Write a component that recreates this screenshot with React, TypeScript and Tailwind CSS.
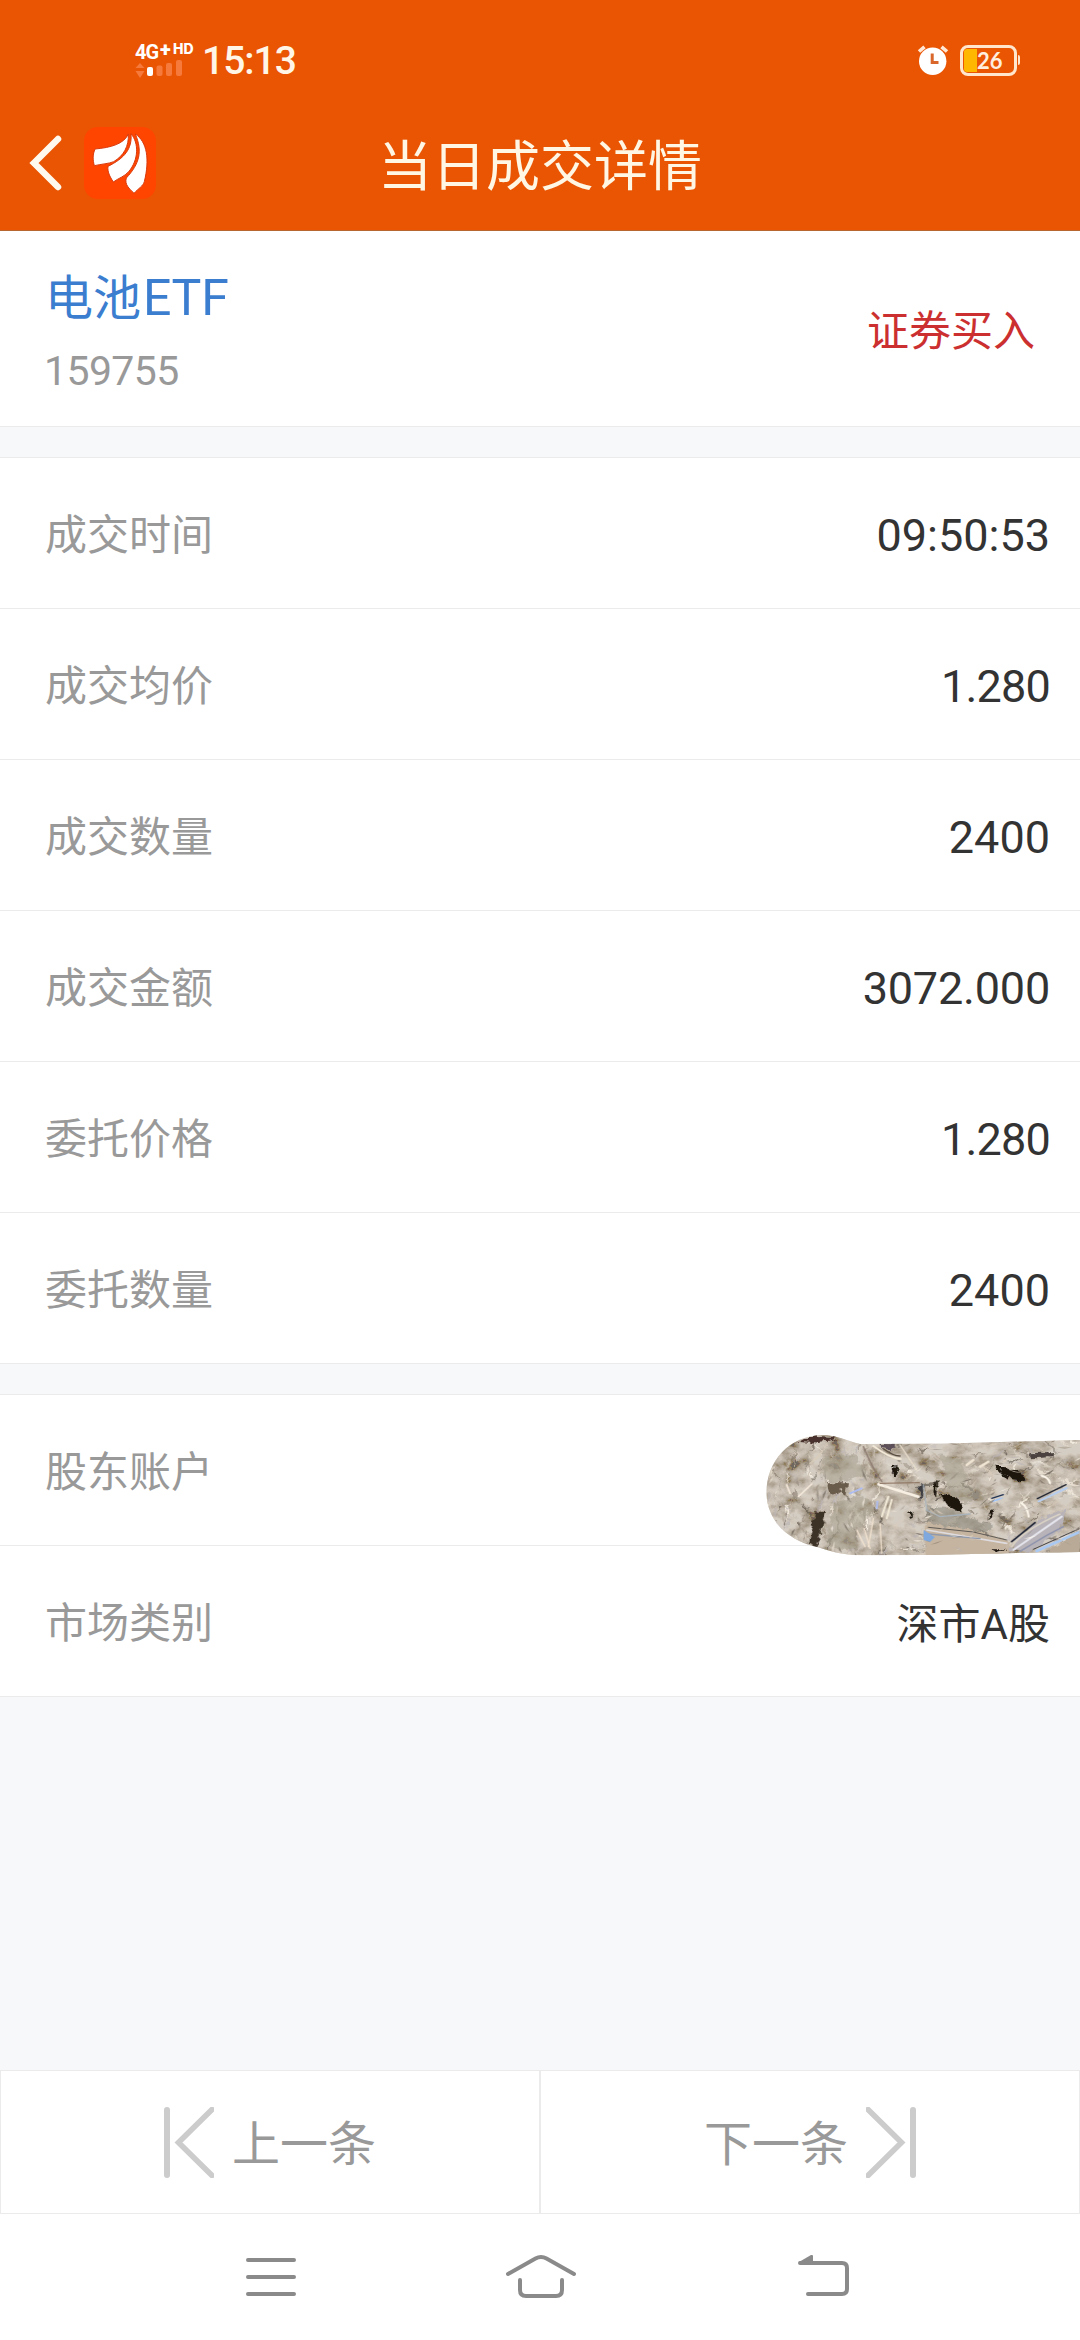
import React from "react";

type Item = { label: string; value?: string; valueClass?: string };

const TRADE: Item[] = [
  { label: "成交时间", value: "09:50:53", valueClass: "text-[45px]" },
  { label: "成交均价", value: "1.280", valueClass: "text-[45px] tracking-[-0.8px]" },
  { label: "成交数量", value: "2400", valueClass: "text-[45px]" },
  { label: "成交金额", value: "3072.000", valueClass: "text-[45px] tracking-[-0.2px]" },
  { label: "委托价格", value: "1.280", valueClass: "text-[45px] tracking-[-0.8px]" },
  { label: "委托数量", value: "2400", valueClass: "text-[45px]" },
];

function SignalIcon() {
  return (
    <svg className="block h-[18px] w-[48px]" viewBox="0 0 48 18">
      <g fill="#f57a3b">
        <path d="M0.5 8 L5 3 L9.500 8Z" />
        <path d="M0.500 11 L9.500 11 L5 18Z" />
        <rect x="21.500" y="5.500" width="6" height="10.500" rx="2" />
        <rect x="31" y="3" width="6" height="13" rx="2" />
        <rect x="41" y="0" width="6" height="16" rx="2" />
      </g>
      <rect x="12" y="7" width="6" height="9" rx="2" fill="#fff" />
    </svg>
  );
}

function AlarmIcon() {
  return (
    <svg className="h-[30px] w-[32px]" viewBox="0 0 32 30">
      <circle cx="15.700" cy="16.300" r="13.700" fill="#fff" />
      <path d="M2 6.500 L7.500 1.800 M24.500 1.800 L30 6.500" stroke="#ffe9d6" strokeWidth="3.600" />
      <path d="M15.200 8.500 V17.500 H21.500" fill="none" stroke="#d9662a" strokeWidth="3" />
    </svg>
  );
}

function Battery() {
  return (
    <div className="flex items-center">
      <div className="relative h-[31px] w-[57px] rounded-[8px] border-[3px] border-[#ffe6cc]">
        <div className="absolute top-px left-px h-[23px] w-[13px] rounded-l-[3px] bg-[#ffb700]" />
        <span className="absolute top-0 left-[14px] font-[Lato] text-[22px] leading-[25px] font-bold text-[#ffeede]">
          26
        </span>
      </div>
      <div className="ml-px h-[10px] w-[2px] rounded-r-sm bg-[#ffe6cc]" />
    </div>
  );
}

function BrandLogo() {
  return (
    <svg className="h-[72px] w-[72px]" viewBox="253 382 216 216">
      <rect x="253" y="382" width="216" height="216" rx="42" fill="#ff4500" />
      <g fill="#fff" stroke="#d93a0c" strokeWidth="3">
        <path d="M386 403 C374 432 334 444 286 448 C279 464 279 480 284 498 C306 493 328 492 342 486 C372 468 388 440 386 403Z" />
        <path d="M394 402 C398 448 374 476 325 500 C323 516 330 530 341 547 C357 535 374 531 387 516 C417 481 418 430 394 402Z" />
        <path d="M407 403 C429 455 420 492 380 535 C374 554 388 566 403 581 C416 566 430 560 434 546 C450 480 443 427 407 403Z" />
      </g>
    </svg>
  );
}

/* Seeded generator so that the foil texture is the same on every render. */
function makeShards(count: number, start: number, maxLen: number, maxWidth: number) {
  let seed = start;
  const next = () => {
    seed = (seed * 16807) % 2147483647;
    return seed / 2147483647;
  };
  const tones = ["#efe6d8", "#d9ccbb", "#8b7f70", "#776b5e", "#c9bcab", "#a09484", "#fff8ec", "#5f564c", "#b9b3b4", "#cfc6c0"];
  return Array.from({ length: count }, () => {
    const x = 78 + next() * 942;
    const y = 245 + next() * 380;
    const steep = x < 450 ? 0.9 + next() * 1.4 : -0.9 + next() * 1.7;
    const len = 8 + next() * maxLen;
    const w = 1 + next() * maxWidth;
    const dx = Math.cos(steep) * len;
    const dy = Math.sin(steep) * len;
    const nx = -Math.sin(steep) * w;
    const ny = Math.cos(steep) * w;
    const p = [
      [x, y],
      [x + dx * 0.5 + nx, y + dy * 0.5 + ny],
      [x + dx, y + dy],
      [x + dx * 0.4 - nx * 0.4, y + dy * 0.4 - ny * 0.4],
    ];
    return {
      points: p.map((q) => q.map((v) => v.toFixed(1)).join(",")).join(" "),
      fill: tones[Math.floor(next() * tones.length)],
      opacity: 0.3 + next() * 0.5,
    };
  });
}

const BASE_SHARDS = makeShards(480, 4217, 70, 8);
const TOP_SHARDS = makeShards(300, 90127, 38, 4);

function Shards({ items }: { items: ReturnType<typeof makeShards> }) {
  return (
    <g>
      {items.map((s, i) => (
        <polygon key={i} points={s.points} fill={s.fill} opacity={s.opacity} />
      ))}
    </g>
  );
}

function FoilCover() {
  return (
    <svg className="absolute top-[35px] right-0 z-10 h-[130px] w-[314px]" viewBox="78 240 942 390">
      <defs>
        <clipPath id="foil">
          <path d="M79 430 C80 330 150 258 245 255 C290 255 320 272 360 282 L600 281 L1020 270 V606 L830 609 L560 615 L360 616 C300 614 270 604 235 592 C140 572 82 510 79 430Z" />
        </clipPath>
        <filter id="grain" x="0" y="0" width="1" height="1">
          <feTurbulence type="fractalNoise" baseFrequency="0.016 0.022" numOctaves="5" seed="8" />
          <feColorMatrix values="2.4 0 0 0 -0.52  2.4 0 0 0 -0.57  2.4 0 0 0 -0.64  0 0 0 0 1" />
        </filter>
        <filter id="crumple" filterUnits="userSpaceOnUse" x="40" y="200" width="1020" height="470">
          <feTurbulence type="fractalNoise" baseFrequency="0.045" numOctaves="3" seed="3" result="n" />
          <feDisplacementMap in="SourceGraphic" in2="n" scale="26" xChannelSelector="R" yChannelSelector="G" />
        </filter>
      </defs>
      <g clipPath="url(#foil)">
        <rect x="78" y="240" width="942" height="390" fill="#b8ac9d" />
        <rect x="78" y="240" width="942" height="390" filter="url(#grain)" opacity="0.4" />
        <g filter="url(#crumple)">
          <Shards items={BASE_SHARDS} />
          <g fill="#aaa393" opacity="0.6">
            <path d="M250 320 L340 315 L385 375 L300 400 L245 385Z" />
            <path d="M280 460 L370 435 L400 490 L345 540 L350 600 L260 590Z" />
            <path d="M600 310 L665 330 L680 400 L740 440 L680 465 L620 420Z" />
            <path d="M560 470 L640 480 L760 530 L720 560 L560 530Z" fill="#8f8c80" />
          </g>
          <path d="M555 520 L700 540 L810 572 L800 625 L556 630Z" fill="#c5b49f" />
          <path d="M805 600 L880 520 L975 475 L960 540 L870 606Z" fill="#b8b3b8" />
          <path d="M890 625 L1050 520 V625Z" fill="#b9aa97" />
          <g fill="#1c1611">
            <path d="M225 484 L258 487 L240 560 L228 590 L204 580Z" fill="#3d3127" />
            <path d="M170 275 L230 258 L290 262 L270 272 L215 278Z" fill="#4a332e" />
            <path d="M456 355 L476 350 L468 388 L458 384Z" />
            <path d="M768 350 L800 352 L858 378 L850 394 L810 386 L786 372Z" />
            <path d="M596 430 L640 438 L668 460 L660 488 L625 468Z" />
            <path d="M582 398 L595 394 L588 436 L580 430Z" />
            <path d="M750 482 L768 476 L742 516Z" />
            <path d="M870 310 L950 306 L945 322 L880 324Z" fill="#4b433f" />
            <path d="M420 282 L464 283 L466 298 L430 292Z" fill="#5b5058" />
            <path d="M498 480 L520 486 L512 506Z" />
            <path d="M255 400 L322 400 L316 432 L300 420 L285 440 L268 425Z" fill="#6b5b4c" />
            <path d="M538 400 L551 410 L543 455 L537 440Z" fill="#3c3d42" />
            <path d="M755 598 L800 598 L775 608Z" />
          </g>
        </g>
        <g fill="none" strokeLinecap="round">
          <path d="M815 575 L885 518" stroke="#1c2233" strokeWidth="5" />
          <path d="M890 603 L1020 545" stroke="#a9c9f2" strokeWidth="8" />
          <path d="M880 598 L1020 535" stroke="#3b3a40" strokeWidth="3" />
          <path d="M892 446 L978 404" stroke="#1f2430" strokeWidth="4" />
          <path d="M896 454 L980 414" stroke="#b6cdee" strokeWidth="6" />
          <path d="M755 445 L790 434" stroke="#1f3050" strokeWidth="4" />
          <path d="M757 454 L788 444" stroke="#a3c4f4" strokeWidth="5" />
          <path d="M415 403 L535 440" stroke="#f7efe2" strokeWidth="8" />
          <path d="M420 400 L538 398" stroke="#8a6f5c" strokeWidth="3" />
          <path d="M370 290 Q400 360 425 395" stroke="#8d7a70" strokeWidth="4" />
          <path d="M400 288 Q450 325 482 327" stroke="#f4ead8" strokeWidth="6" />
          <path d="M430 296 Q460 318 480 318" stroke="#54483a" strokeWidth="4" />
          <path d="M480 285 L530 360" stroke="#eadfcd" strokeWidth="4" />
          <path d="M560 540 L800 580" stroke="#dfdce0" strokeWidth="5" />
          <path d="M565 532 L700 546 L800 570" stroke="#5d5955" strokeWidth="3" />
          <path d="M565 552 L720 566" stroke="#8f99ab" strokeWidth="4" />
          <path d="M820 600 L900 545 L965 500" stroke="#e4e4ec" strokeWidth="6" />
          <path d="M840 604 L920 556 L970 530" stroke="#8d93ac" strokeWidth="4" />
          <path d="M815 590 Q850 540 960 492" stroke="#d9d1c4" strokeWidth="5" />
          <path d="M425 500 L445 440 M440 505 L455 450" stroke="#f3ead8" strokeWidth="6" />
          <path d="M350 540 L375 590 M372 535 L390 595 M400 505 L385 590 M420 520 L425 610" stroke="#f2e2cf" strokeWidth="4" />
          <path d="M140 405 L150 430 M175 440 L215 402" stroke="#f4e8da" strokeWidth="5" />
          <path d="M680 345 L700 330 M720 350 L745 335" stroke="#efe4d2" strokeWidth="7" />
          <path d="M845 460 Q862 470 866 500 M905 378 Q925 380 930 400" stroke="#fbf5ea" strokeWidth="6" />
          <path d="M550 405 L560 480 L600 500 L690 492" stroke="#a9b3bb" strokeWidth="4" />
          <path d="M410 475 L412 455 M330 430 L365 415" stroke="#aebdf0" strokeWidth="6" />
        </g>
        <path d="M551 540 L584 562 L570 576 L551 570Z" fill="#7ea8de" />
        <Shards items={TOP_SHARDS} />
      </g>
    </svg>
  );
}

function Row({ label, value, valueClass, children }: Item & { children?: React.ReactNode }) {
  return (
    <div className="relative flex h-[151px] items-center justify-between border-b border-[#ebebeb] bg-white pt-[6px] pr-[30px] pl-[45px]">
      <span className="text-[42px] leading-[60px] text-[#999]">{label}</span>
      {value && (
        <div className="flex text-[#333]">
          <span className={valueClass}>{value}</span>
        </div>
      )}
      {children}
    </div>
  );
}

function Gap() {
  return <div className="h-[31px] shrink-0 border-b border-[#ebebeb] bg-[#f7f8fa]" />;
}

function StepIcon({ flip = false }: { flip?: boolean }) {
  return (
    <svg className={flip ? "h-[71px] w-[50px] -scale-x-100" : "h-[71px] w-[50px]"} viewBox="0 0 50 71">
      <path d="M3 3 V68" stroke="#ccc" strokeWidth="6" strokeLinecap="round" />
      <path d="M48 2.500 L14.500 35.500 L48 68.500" fill="none" stroke="#ccc" strokeWidth="5.600" strokeLinecap="round" />
    </svg>
  );
}

export default function App() {
  return (
    <div className="flex h-[2340px] w-[1080px] flex-col overflow-hidden bg-[#f7f8fa] font-[Roboto,'Noto_Sans_CJK_SC',sans-serif]">
      <header className="flex h-[231px] shrink-0 flex-col border-b border-[#b8662f] bg-[#ea5504]">
        <div className="flex h-[96px] items-center justify-between pt-[24px] pr-[60px] pl-[135px]">
          <div className="flex items-center">
            <div className="flex w-[60px] flex-col pt-[1px]">
              <div className="flex h-[16px] items-start font-bold text-white">
                <span className="w-[25px] text-[20px] leading-[16px] tracking-[-1px]">4G</span>
                <span className="w-[13px] text-[20px] leading-[10px] font-black">+</span>
                <span className="font-[Inter] text-[14px] leading-[10px] font-extrabold">HD</span>
              </div>
              <SignalIcon />
            </div>
            <span className="ml-[7px] pt-[2px] text-[39px] leading-[40px] font-medium tracking-[-1px] text-[#fff6e8]">15:13</span>
          </div>
          <div className="flex items-center gap-[11px]">
            <AlarmIcon />
            <Battery />
          </div>
        </div>
        <div className="grid flex-1 grid-cols-[1fr_auto_1fr] items-center">
          <div className="flex items-center pl-[29px]">
            <svg className="h-[56px] w-[34px]" viewBox="0 0 34 56">
              <path d="M29 4 L5 28 L29 52" fill="none" stroke="#fff9ee" strokeWidth="6.500" strokeLinecap="round" />
            </svg>
            <div className="ml-[21px]">
              <BrandLogo />
            </div>
          </div>
          <h1 className="pt-[10px] text-[54px] leading-[70px] text-[#fff6e4]">当日成交详情</h1>
          <div />
        </div>
      </header>

      <section className="flex h-[196px] shrink-0 items-center justify-between border-b border-[#ebebeb] bg-white px-[45px]">
        <div className="flex flex-col pt-[11px]">
          <span className="text-[48px] leading-[72px] text-[#3b7dcf]">
            电池<span className="ml-[2px] text-[50px] tracking-[-0.3px]">ETF</span>
          </span>
          <span className="-ml-px text-[41px] leading-[72px] tracking-[-0.6px] text-[#999]">159755</span>
        </div>
        <span className="pt-[6px] text-[42px] leading-[60px] text-[#cc2f2f]">证券买入</span>
      </section>

      <Gap />
      {TRADE.map((r) => (
        <Row key={r.label} {...r} />
      ))}
      <Gap />
      <Row label="股东账户">
        <FoilCover />
      </Row>
      <Row label="市场类别" value="深市A股" valueClass="text-[42px]" />

      <div className="flex-1" />

      <div className="grid h-[144px] shrink-0 grid-cols-2 bg-white text-[48px] leading-[60px] text-[#999]">
        <button className="flex items-center justify-center gap-[18px] border border-[#ebebeb]">
          <StepIcon />
          <span className="pt-[6px]">上一条</span>
        </button>
        <button className="flex items-center justify-center gap-[18px] border border-[#ebebeb]">
          <span className="pt-[6px]">下一条</span>
          <StepIcon flip />
        </button>
      </div>

      <nav className="flex h-[126px] shrink-0 items-start bg-white pt-[38px] pl-[245px]">
        <svg className="h-[50px] w-[52px]" viewBox="245 2252 52 50">
          <path d="M248 2260 H294 M248 2277 H294 M248 2294 H294" stroke="#8a8a8a" strokeWidth="4" strokeLinecap="round" />
        </svg>
        <svg className="ml-[208px] h-[50px] w-[72px]" viewBox="505 2252 72 50">
          <g fill="none" stroke="#8a8a8a" strokeWidth="4" strokeLinecap="round">
            <path d="M508 2274 L535.500 2258.500 Q541 2255.500 546.500 2258.500 L574 2274" />
            <path d="M520 2280 V2290 Q520 2296 526 2296 H556 Q562 2296 562 2290 V2280" />
          </g>
        </svg>
        <svg className="ml-[220px] h-[50px] w-[54px]" viewBox="797 2252 54 50">
          <path d="M800 2263 H842 Q847 2263 847 2268 V2289 Q847 2294 842 2294 H808" fill="none" stroke="#8a8a8a" strokeWidth="4" strokeLinecap="round" />
          <path d="M799 2262 L811 2255 Q813 2254.500 813 2256 V2264 H800Z" fill="#8a8a8a" />
        </svg>
      </nav>
    </div>
  );
}
